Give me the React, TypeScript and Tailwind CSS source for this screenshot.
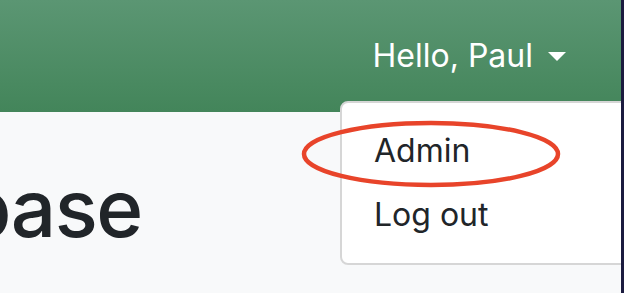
export default function App() {
  return (
    <div className="w-[624px] h-[293px] flex overflow-hidden bg-[#f8f9fa] font-['Inter',sans-serif]">
      <div className="relative flex-1 min-w-0 flex flex-col overflow-hidden">
        {/* Navbar */}
        <header className="h-[112px] shrink-0 bg-gradient-to-b from-[#5b9673] to-[#43855a] flex justify-end pt-[32px] pr-[55px]">
          <button className="flex items-center gap-[15px] text-white text-[32px] leading-[48px] h-[48px]">
            <span>Hello, Paul</span>
            <span className="w-0 h-0 border-t-[9px] border-t-white border-x-[9.5px] border-x-transparent" />
          </button>
        </header>

        {/* Page content */}
        <main className="pt-[48px]">
          <h1 className="ml-[-38px] text-[80px] leading-[96px] font-medium tracking-[-1.5px] text-[#212529] whitespace-nowrap">base</h1>
        </main>

        {/* Dropdown menu */}
        <div className="absolute top-[101px] left-[340px] w-[320px] bg-white border-2 border-[#d6d6d6] rounded-[8px] py-[16px]">
          <a className="block px-[32px] py-[8px] text-[32px] leading-[48px] text-[#212529]">Admin</a>
          <a className="block px-[32px] py-[8px] text-[32px] leading-[48px] text-[#212529]">Log out</a>
        </div>

        {/* Annotation */}
        <svg className="absolute left-[298px] top-[117px]" width="268" height="74" viewBox="0 0 268 74">
          <ellipse cx="133" cy="37" rx="127" ry="31" fill="none" stroke="#e8442a" strokeWidth="4.5" />
        </svg>
      </div>
      <div className="w-[3px] shrink-0 bg-[#1b1b3f]" />
    </div>
  );
}
